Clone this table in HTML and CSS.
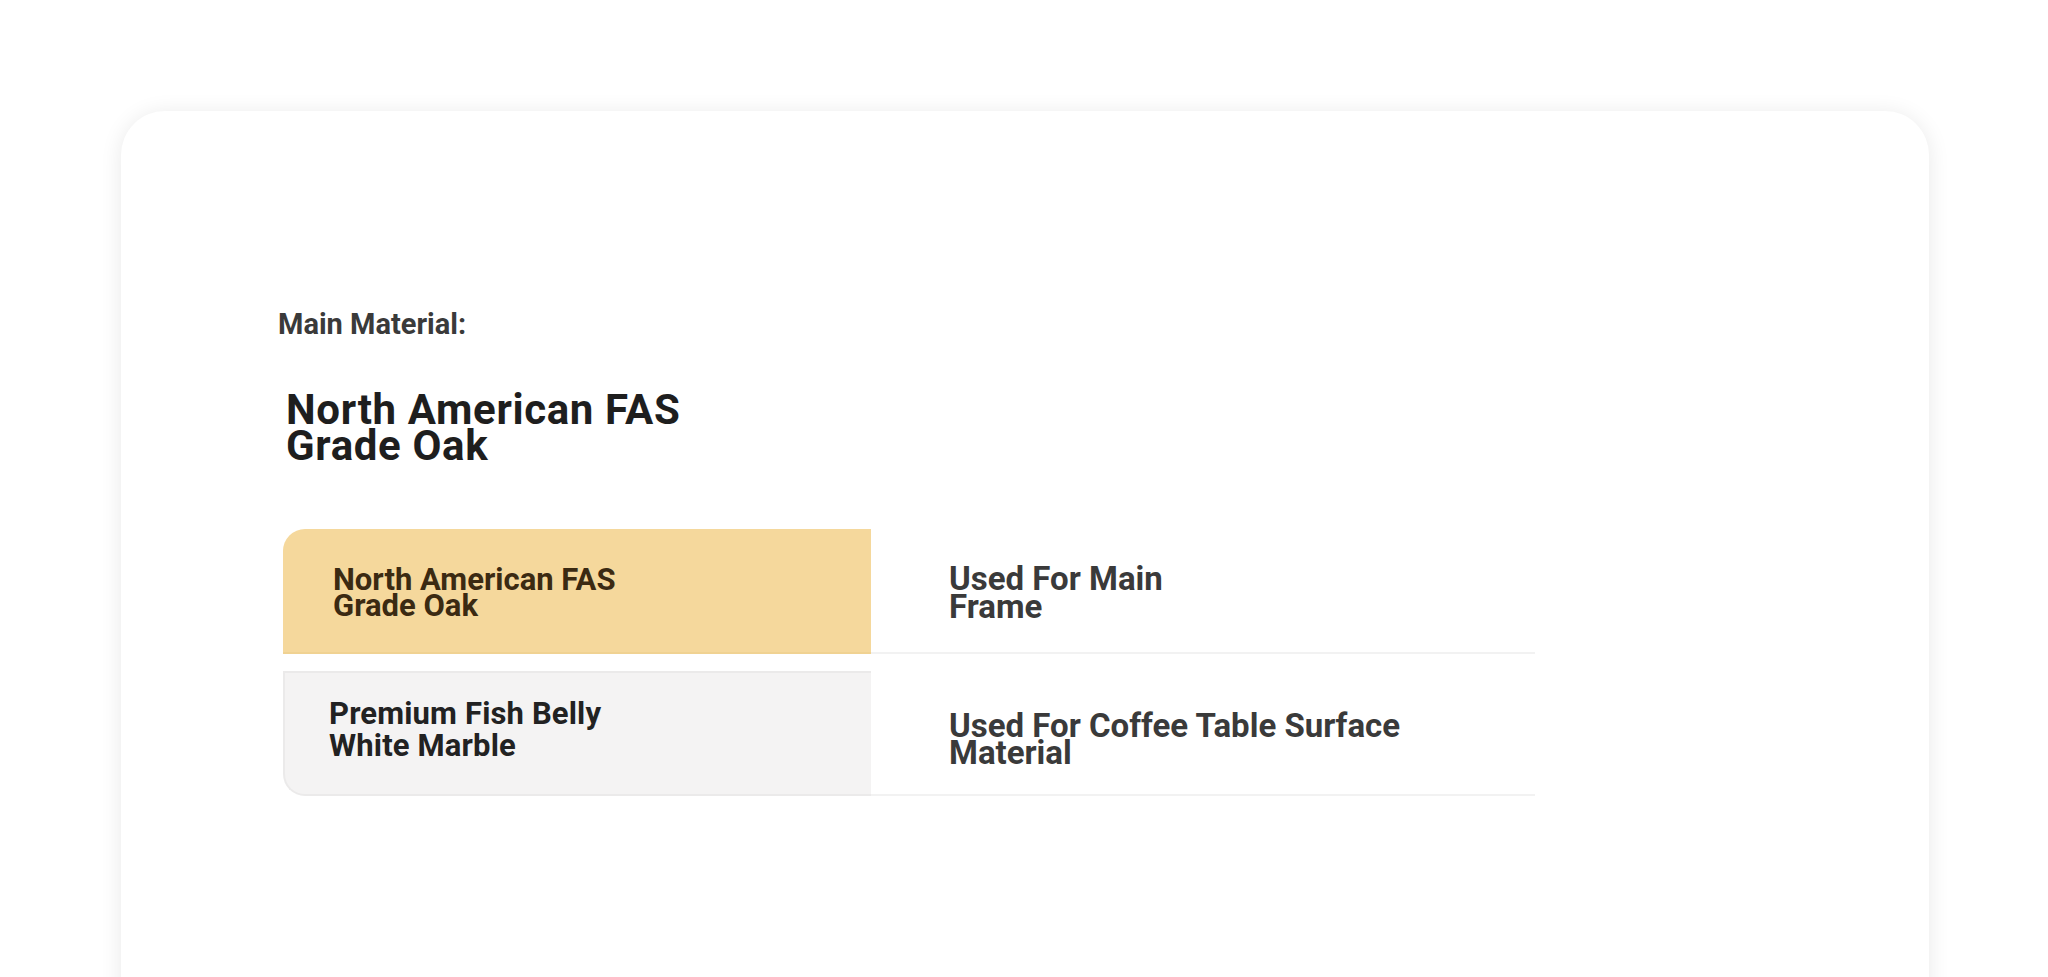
FILE: index.html
```html
<!DOCTYPE html>
<html lang="en">
<head>
<meta charset="utf-8">
<title>Main Material</title>
<link rel="stylesheet" href="styles.css">
</head>
<body>
<div class="page">
  <section class="card">
    <div class="label">Main Material:</div>
    <h1 class="title">North American FAS<br>Grade Oak</h1>
    <div class="table">
      <div class="row">
        <div class="cell-left oak">North American FAS<br>Grade Oak</div>
        <div class="cell-right r1">Used For Main<br>Frame</div>
      </div>
      <div class="row">
        <div class="cell-left marble">Premium Fish Belly<br>White Marble</div>
        <div class="cell-right r2">Used For Coffee Table Surface<br>Material</div>
      </div>
    </div>
  </section>
</div>
</body>
</html>
```
FILE: styles.css
```css
html, body {
  margin: 0;
  padding: 0;
  background: #ffffff;
}
body {
  font-family: Roboto, "Noto Sans", sans-serif;
  font-weight: 700;
  overflow: hidden;
}
.page {
  padding: 111px 119px 0 121px;
}
.card {
  background: #ffffff;
  border-radius: 44px;
  box-shadow: 0 2px 22px rgba(0, 0, 0, 0.09);
  height: 1000px;
  padding: 196px 0 0 157px;
  box-sizing: border-box;
}
.label {
  font-size: 29px;
  line-height: 34px;
  color: #3a3a3a;
}
.title {
  margin: 51px 0 0 8px;
  font-size: 42px;
  line-height: 36px;
  font-weight: 700;
  color: #1e1e1e;
  letter-spacing: 0.65px;
}
.table {
  margin: 65px 0 0 5px;
  width: 1252px;
  display: flex;
  flex-direction: column;
  gap: 17px;
}
.row {
  display: flex;
  height: 125px;
}
.cell-left {
  width: 588px;
  box-sizing: border-box;
  font-size: 31px;
}
.oak {
  background: #f5d89c;
  border-top-left-radius: 22px;
  color: #3b2a12;
  padding: 38px 0 0 50px;
  line-height: 26px;
  border-bottom: 2px solid #f0d292;
}
.marble {
  background: #f4f3f3;
  border: 2px solid #ebeaea;
  border-right: none;
  border-bottom-left-radius: 22px;
  color: #222222;
  padding: 25px 0 0 44px;
  line-height: 32px;
  letter-spacing: 0.15px;
}
.cell-right {
  flex: 1;
  box-sizing: border-box;
  padding-left: 78px;
  font-size: 33px;
  color: #3a3a3a;
  border-bottom: 2px solid #f2f2f2;
}
.r1 {
  padding-top: 36px;
  line-height: 28px;
}
.r2 {
  padding-top: 41px;
  line-height: 27px;
}
```
